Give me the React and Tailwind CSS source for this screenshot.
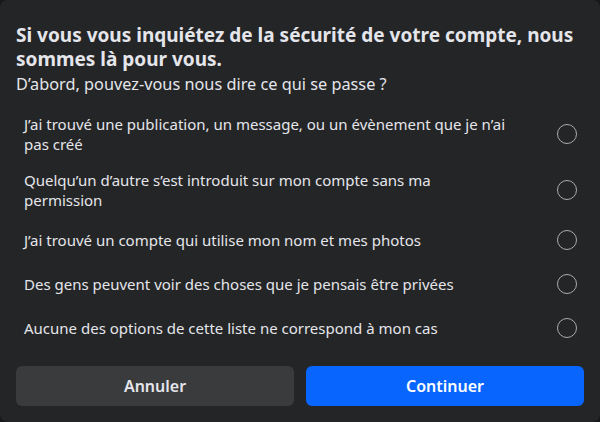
import React, { useState } from 'react';

const options = [
  ['J’ai trouvé une publication, un message, ou un évènement que je n’ai', 'pas créé'],
  ['Quelqu’un d’autre s’est introduit sur mon compte sans ma', 'permission'],
  ['J’ai trouvé un compte qui utilise mon nom et mes photos'],
  ['Des gens peuvent voir des choses que je pensais être privées'],
  ['Aucune des options de cette liste ne correspond à mon cas'],
];

const App = () => {
  const [selected, setSelected] = useState(null);

  return (
    <div className="w-[600px] h-[422px] bg-[#18191a]" style={{ fontFamily: '"Noto Sans", "Open Sans", sans-serif' }}>
      <div className="w-full h-full bg-[#242526] rounded-lg flex flex-col px-4 pt-[23px] pb-4">
        <h2 className="text-[19px] leading-6 font-bold text-[#e4e6eb]">
          Si vous vous inquiétez de la sécurité de votre compte, nous sommes là pour vous.
        </h2>
        <p className="mt-[3px] text-[16.3px] leading-5 text-[#e4e6eb]">
          D’abord, pouvez-vous nous dire ce qui se passe ?
        </p>

        <div className="mt-3 flex flex-col">
          {options.map((lines, i) => (
            <label
              key={i}
              onClick={() => setSelected(i)}
              className="flex items-center justify-between gap-3 min-h-[44px] py-2 pl-2 pr-[7px] cursor-pointer"
            >
              <span className="text-[15px] leading-5 text-[#e4e6eb]">
                {lines[0]}
                {lines[1] && <br />}
                {lines[1]}
              </span>
              <span
                className={
                  selected === i
                    ? 'w-5 h-5 shrink-0 rounded-full border-[6px] border-[#0866ff]'
                    : 'w-5 h-5 shrink-0 rounded-full border-[1.5px] border-[#a8abaf]'
                }
              />
            </label>
          ))}
        </div>

        <div className="mt-auto grid grid-cols-2 gap-3">
          <button className="h-10 rounded-md bg-[#3a3b3c] text-[16px] font-semibold text-[#e4e6eb]">
            Annuler
          </button>
          <button className="h-10 rounded-md bg-[#0866ff] text-[16px] font-semibold text-white">
            Continuer
          </button>
        </div>
      </div>
    </div>
  );
};

export default App;
